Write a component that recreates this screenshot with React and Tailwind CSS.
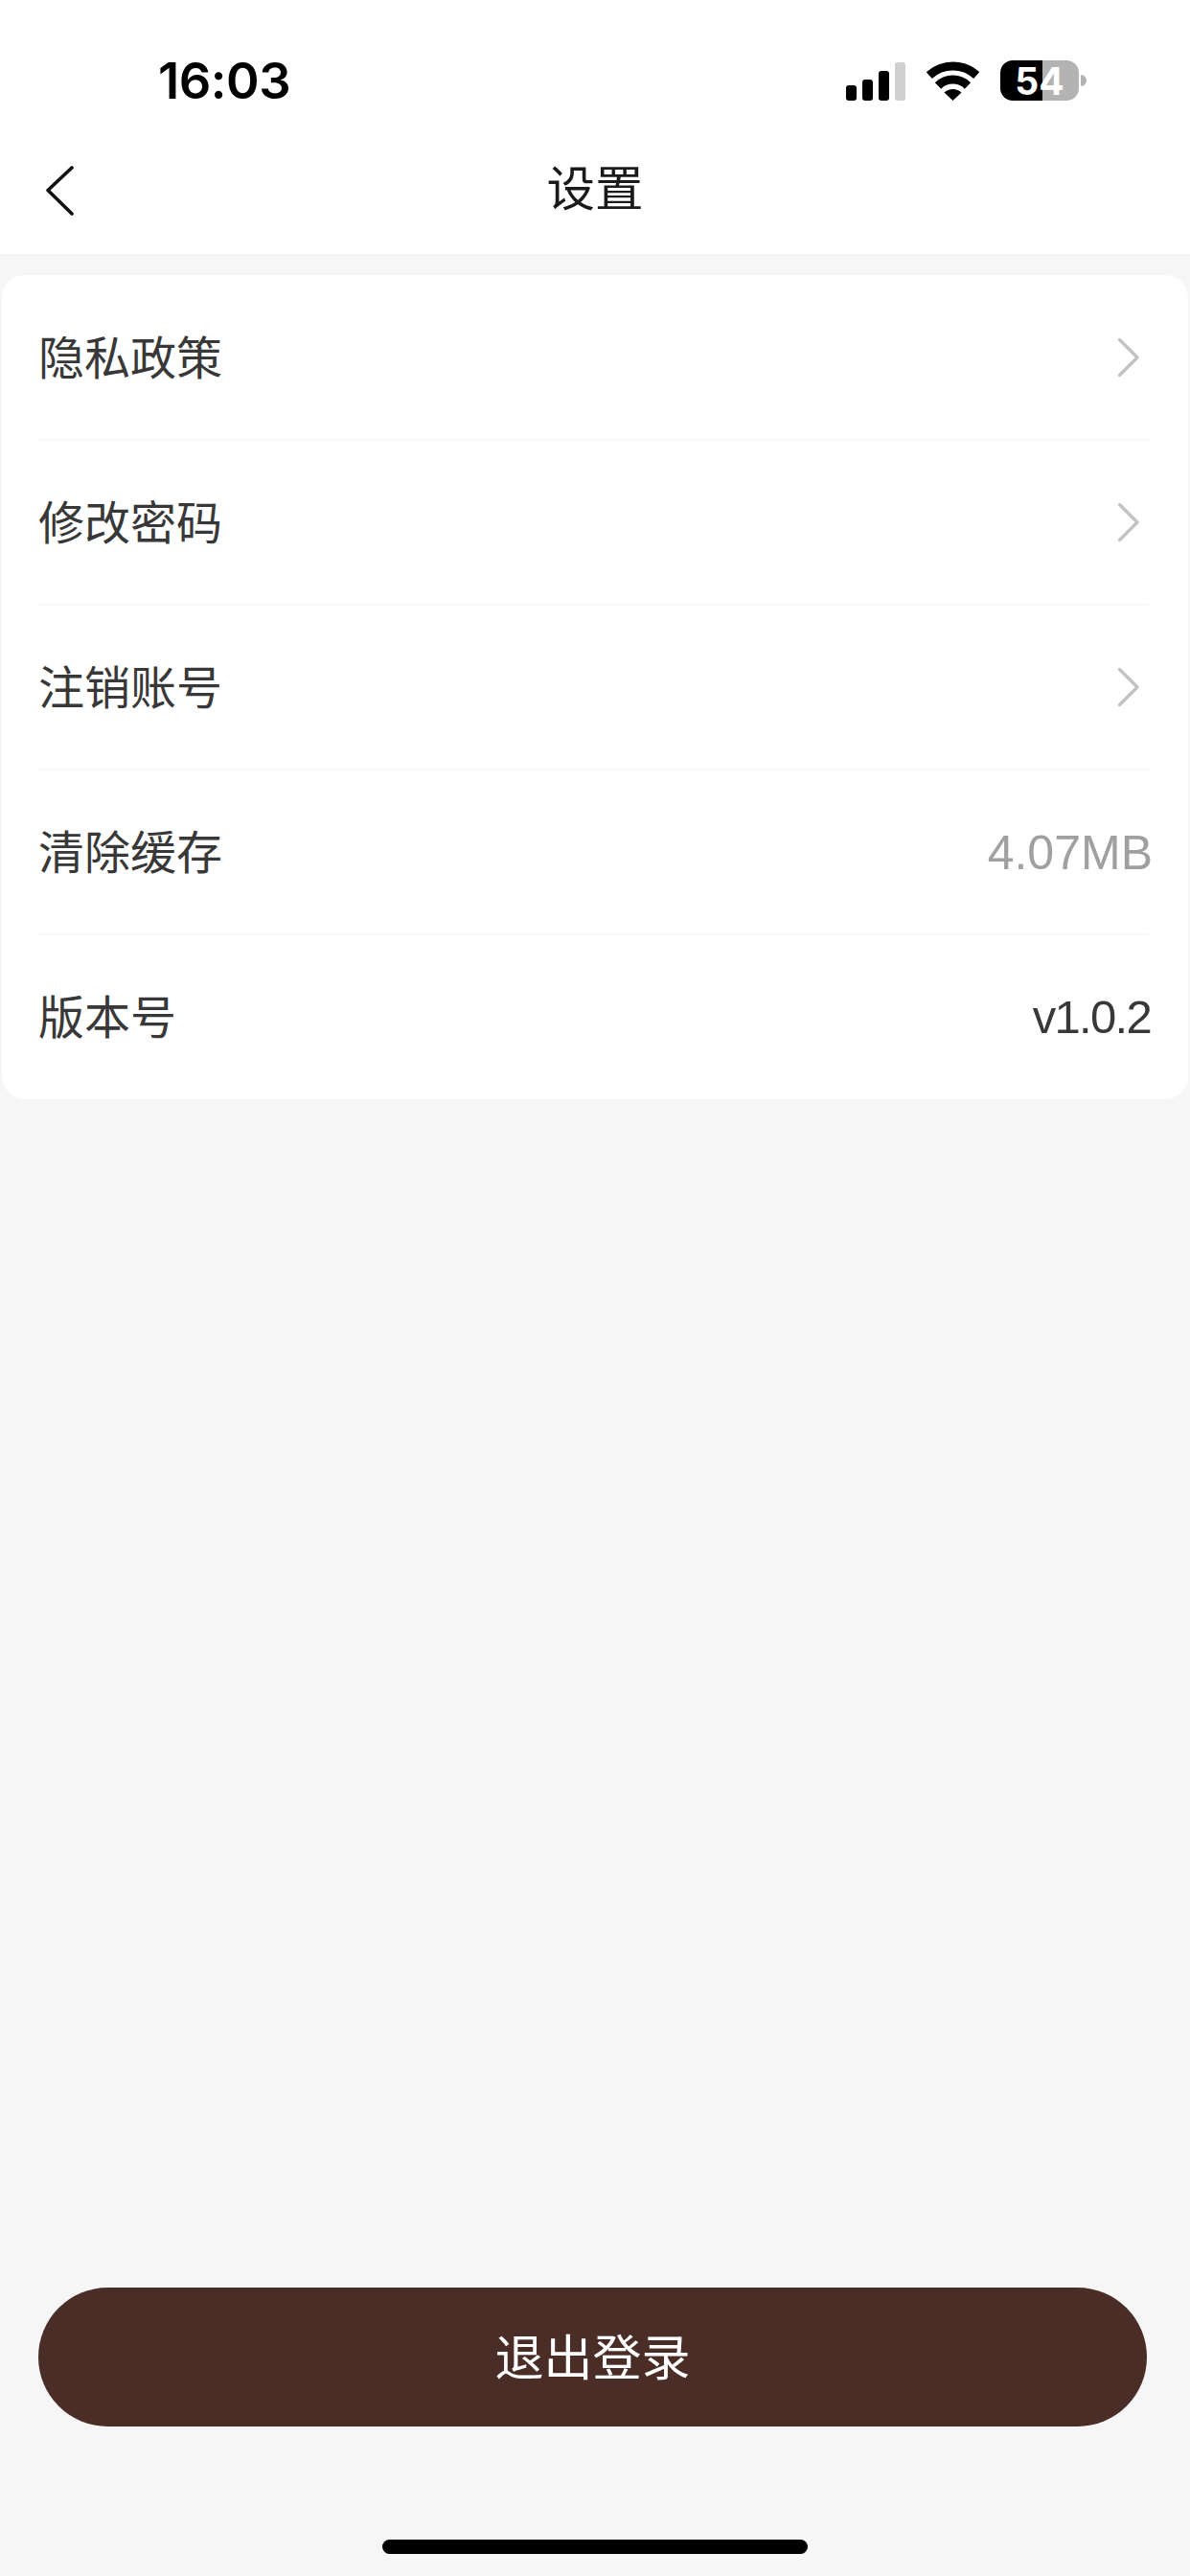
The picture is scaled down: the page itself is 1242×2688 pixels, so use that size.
const cjk = "font-['Liberation_Sans','Noto_Sans_CJK_SC',sans-serif]";

function Chevron() {
  return (
    <svg width="22" height="40" viewBox="0 0 22 40" fill="none" className="mr-[14px] shrink-0 text-[#c2c2c2]">
      <path d="M1.5 1.5 L20 20 L1.5 38.5" stroke="currentColor" strokeWidth="3.2" strokeLinecap="round" strokeLinejoin="round" />
    </svg>
  );
}

function Row({ label, value, valueClass, chevron }) {
  return (
    <div className="flex h-[170px] items-center justify-between pl-[38px] pr-[37px]">
      <span className="pt-[3px] text-[48px] leading-none text-[#383838]">{label}</span>
      {chevron ? <Chevron /> : <span className={`pt-[1px] leading-none ${valueClass}`}>{value}</span>}
    </div>
  );
}

function Divider() {
  return <div className="ml-[38px] mr-[41px] h-[2px] bg-[#f9f9f9]" />;
}

export default function App() {
  return (
    <div className={`flex h-[2688px] w-[1242px] flex-col bg-[#f6f6f6] ${cjk}`}>
      <header className="h-[265px] shrink-0 bg-white">
        <div className="flex h-[168px] items-center justify-between pl-[165px] pr-[108px]">
          <span className="font-['Inter',sans-serif] text-[52.5px] font-semibold leading-none tracking-[-0.5px] text-black">16:03</span>
          <div className="flex items-center">
            <div className="flex h-[41px] items-end gap-[6px]">
              <div className="h-[16px] w-[11px] rounded-[3px] bg-black" />
              <div className="h-[22px] w-[11px] rounded-[3px] bg-black" />
              <div className="h-[31px] w-[11px] rounded-[3px] bg-black" />
              <div className="h-[40px] w-[11px] rounded-[3px] bg-[#cfcfcf]" />
            </div>
            <svg width="55" height="41" viewBox="0 0 55 41" className="ml-[22px]" fill="none">
              <path d="M2.8 14.6 A36.5 36.5 0 0 1 52.2 14.6" stroke="#000" strokeWidth="9" />
              <path d="M12 25.5 A22 22 0 0 1 43 25.5" stroke="#000" strokeWidth="9" />
              <path d="M27.5 41 L18.5 32.5 A13 13 0 0 1 36.5 32.5 Z" fill="#000" />
            </svg>
            <div className="ml-[22px] flex h-[42px] w-[82px] items-center justify-center rounded-[13px] bg-[linear-gradient(90deg,#000_54%,#b3b3b3_54%)] font-['Inter',sans-serif] text-[39px] font-bold leading-none text-white">54</div>
            <div className="ml-[2px] h-[12px] w-[6px] rounded-r-[6px] bg-[#b3b3b3]" />
          </div>
        </div>
        <div className="relative flex h-[60px] items-center justify-center">
          <svg width="30" height="52" viewBox="0 0 30 52" fill="none" className="absolute left-[48px] top-[5px]">
            <path d="M27 2 L2 25.5 L27 50" stroke="#111" strokeWidth="3.6" strokeLinecap="round" strokeLinejoin="round" />
          </svg>
          <span className="text-[50.5px] leading-none text-[#1a1a1a]">设置</span>
        </div>
      </header>

      <section className="mx-[2px] mt-[22px] overflow-hidden rounded-[24px] bg-white py-[1px]">
        <Row label="隐私政策" chevron />
        <Divider />
        <Row label="修改密码" chevron />
        <Divider />
        <Row label="注销账号" chevron />
        <Divider />
        <Row label="清除缓存" value="4.07MB" valueClass="text-[50px] text-[#a0a0a0]" />
        <Divider />
        <Row label="版本号" value="v1.0.2" valueClass="mr-[2px] text-[49px] tracking-[-1.7px] text-[#383838]" />
      </section>

      <div className="mt-auto px-[40px]">
        <button className="flex h-[145px] w-[1157px] items-center justify-center rounded-full bg-[#4a2d27] pt-[4px] text-[51px] leading-none text-white">退出登录</button>
      </div>
      <div className="mb-[23px] mt-[118px] flex justify-center">
        <div className="h-[15px] w-[444px] rounded-full bg-black" />
      </div>
    </div>
  );
}
